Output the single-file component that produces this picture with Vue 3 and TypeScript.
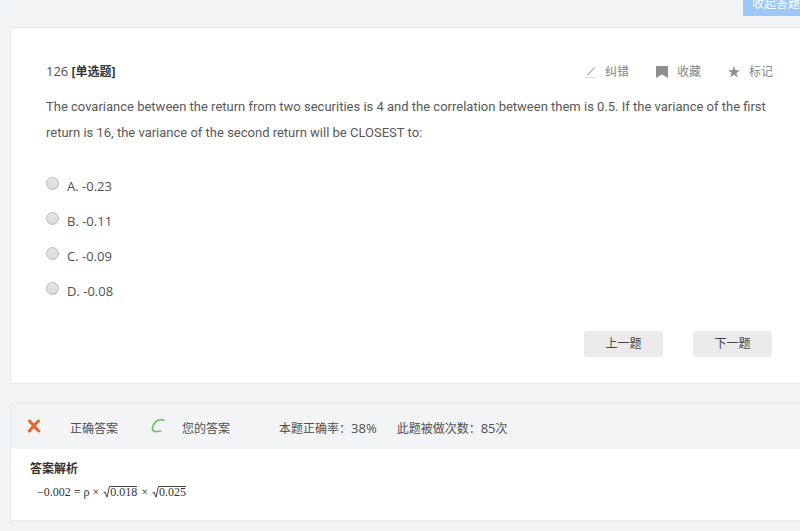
<script setup lang="ts">
import { ref } from 'vue'

interface Option {
  key: string
  text: string
}

const options: Option[] = [
  { key: 'A', text: '-0.23' },
  { key: 'B', text: '-0.11' },
  { key: 'C', text: '-0.09' },
  { key: 'D', text: '-0.08' },
]
const selected = ref<string>('')
</script>

<template>
  <div class="page">
    <header class="topbar">
      <button type="button" class="collapse">收起答题</button>
    </header>

    <main class="card question">
      <div class="head">
        <h1 class="title"><span class="num">126</span> <b>[单选题]</b></h1>
        <div class="tools">
          <button type="button" class="tool">
            <svg class="icon" viewBox="0 0 14 14" aria-hidden="true">
              <path d="M3.5 11 L4.4 9 L11.3 1.8 L12.5 2.8 L5.6 10 Z" fill="#bdbdbd" />
              <path d="M2 12.5 H12.5" stroke="#dedede" />
            </svg>
            纠错
          </button>
          <button type="button" class="tool">
            <svg class="icon" viewBox="0 0 14 14" aria-hidden="true">
              <path d="M1 1 H13 V13 L7 9.5 L1 13 Z" fill="#8f8f8f" />
            </svg>
            收藏
          </button>
          <button type="button" class="tool">
            <svg class="icon" viewBox="0 0 14 14" aria-hidden="true">
              <path d="M7 1 L8.5 5.2 L13 5.3 L9.4 8 L10.7 12.4 L7 9.8 L3.3 12.4 L4.6 8 L1 5.3 L5.5 5.2 Z" fill="#8f8f8f" />
            </svg>
            标记
          </button>
        </div>
      </div>

      <p class="stem">
        The covariance between the return from two securities is 4 and the correlation between them is 0.5. If the variance of the first return is 16, the variance of the second return will be CLOSEST to:
      </p>

      <div class="options" role="radiogroup">
        <label v-for="option in options" :key="option.key" class="option">
          <input v-model="selected" type="radio" name="answer" :value="option.key" />
          <span>{{ option.key }}. {{ option.text }}</span>
        </label>
      </div>

      <nav class="pager">
        <button type="button">上一题</button>
        <button type="button">下一题</button>
      </nav>
    </main>

    <section class="card result">
      <div class="summary">
        <svg class="mark cross" viewBox="0 0 14 14" aria-hidden="true">
          <path d="M2.5 2 Q6 6 11.7 12 M11.5 2 Q7 6 2.3 12" fill="none" stroke="#e9652c" stroke-width="3" stroke-linecap="round" />
        </svg>
        <span class="correct">正确答案</span>
        <svg class="mark letter" viewBox="0 0 14 14" aria-hidden="true">
          <path d="M12.8 1.2 C8 -.2 4.6 1.8 2.4 6 C-.2 11.5 2.4 13.8 9.6 12" fill="none" stroke="#6cc067" stroke-width="1.7" stroke-linecap="round" />
        </svg>
        <span class="yours">您的答案</span>
        <span class="rate">本题正确率：<span class="num">38%</span></span>
        <span>此题被做次数：<span class="num">85</span>次</span>
      </div>
      <div class="analysis">
        <h2>答案解析</h2>
        <p class="formula">
          <span>−0.002 = ρ ×</span>
          <span class="root">
            <svg viewBox="0 0 7 12" aria-hidden="true"><path d="M.4 7 L2 6 L4 11.2 L6.5 .5 H7" fill="none" stroke="#444" /></svg>
            <span class="radicand">0.018</span>
          </span>
          <span>×</span>
          <span class="root">
            <svg viewBox="0 0 7 12" aria-hidden="true"><path d="M.4 7 L2 6 L4 11.2 L6.5 .5 H7" fill="none" stroke="#444" /></svg>
            <span class="radicand">0.025</span>
          </span>
        </p>
      </div>
    </section>
  </div>
</template>

<style>
body {
  margin: 0;
  background: #f4f4f4;
}
</style>

<style scoped>
.page {
  box-sizing: border-box;
  min-height: 100vh;
  padding-left: 10px;
  background: #f4f4f4;
  color: #505050;
  font: 12px/18px "Open Sans", "Noto Sans CJK SC", sans-serif;
  overflow: hidden;
}
button {
  border: 0;
  margin: 0;
  font: inherit;
  color: inherit;
  cursor: pointer;
}
.num {
  font-size: 13px;
}
.topbar {
  display: flex;
  justify-content: flex-end;
  align-items: flex-start;
  height: 27px;
  background: #f3f4f6;
}
.collapse {
  padding: 0 0 8px 9px;
  line-height: 8px;
  color: #fff;
  background: #9cc7f6;
  border-radius: 0 0 0 2px;
  white-space: nowrap;
}
.card {
  background: #fff;
  border: solid #e8e9ea;
  border-width: 1px 0 1px 1px;
}
.question {
  padding: 33px 24px 26px 35px;
}
.head {
  display: flex;
  justify-content: space-between;
  align-items: center;
}
.title {
  margin: 0;
  font-size: 12px;
  font-weight: 400;
}
.title b {
  color: #333;
}
.tools {
  display: flex;
  gap: 26px;
  padding: 2px 3px 0 0;
}
.tool {
  display: flex;
  align-items: center;
  gap: 8px;
  padding: 0;
  background: none;
  color: #858585;
}
.icon {
  width: 14px;
  height: 14px;
}
.stem {
  margin: 13px 0 0;
  font-family: Roboto, "Noto Sans CJK SC", sans-serif;
  font-size: 13px;
  line-height: 26px;
  color: #585858;
}
.options {
  display: flex;
  flex-direction: column;
  gap: 17px;
  margin-top: 31px;
}
.option {
  display: flex;
  align-items: flex-start;
  gap: 8px;
}
.option span {
  font-size: 13px;
  line-height: 18px;
}
.option input {
  appearance: none;
  box-sizing: border-box;
  width: 13px;
  height: 13px;
  margin: 0;
  border: 1px solid #b9b9b9;
  border-radius: 50%;
  background: linear-gradient(#e4e4e4, #dcdcdc);
}
.option input:checked {
  background: radial-gradient(#555 35%, #e2e2e2 40%);
}
.pager {
  display: flex;
  justify-content: flex-end;
  gap: 30px;
  margin-top: 31px;
  padding-right: 4px;
}
.pager button {
  width: 79px;
  height: 26px;
  padding: 0;
  border-radius: 3px;
  background: #ebebec;
  color: #444;
}
.result {
  margin-top: 19px;
}
.summary {
  display: flex;
  align-items: baseline;
  padding: 15px 0 11px 16px;
  background: #f3f4f6;
}
.mark {
  align-self: flex-start;
  width: 14px;
  height: 14px;
}
.cross {
  margin-right: 29px;
}
.correct {
  margin-right: 33px;
}
.letter {
  margin-right: 17px;
}
.yours {
  margin-right: 49px;
}
.rate {
  margin-right: 20px;
}
.analysis {
  padding: 11px 19px 20px;
}
.analysis h2 {
  margin: 0;
  font-size: 12px;
  font-weight: 700;
  color: #333;
}
.formula {
  display: flex;
  align-items: center;
  gap: 4px;
  margin: 6px 0 0 7px;
  font: 12px/16px "Liberation Serif", serif;
  color: #333;
}
.root {
  display: flex;
  align-items: center;
}
.root svg {
  width: 7px;
  height: 12px;
}
.radicand {
  border-top: 1px solid #444;
  line-height: 11px;
}
</style>
